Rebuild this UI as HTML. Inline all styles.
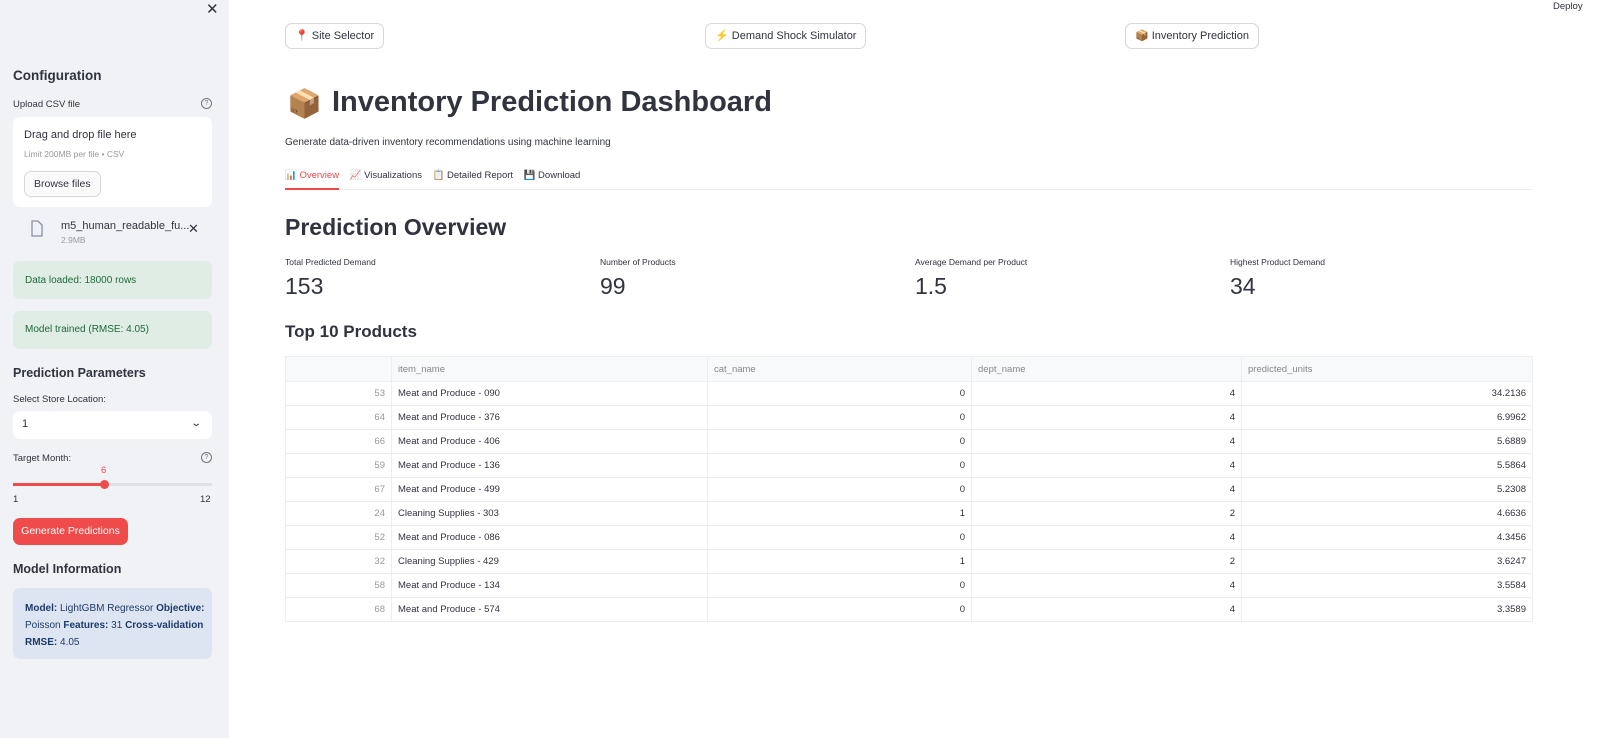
<!DOCTYPE html>
<html><head><meta charset="utf-8"><style>
*{box-sizing:border-box;margin:0;padding:0}
body{width:1600px;height:738px;overflow:hidden;font-family:"Liberation Sans",sans-serif;color:#31333f;background:#fff;position:relative}
.sb{position:absolute;left:0;top:0;width:229px;height:738px;background:#f0f2f6}
.a{position:absolute;white-space:nowrap}
.btn{position:absolute;border:1px solid #d5d7dc;border-radius:7px;background:#fff;font-size:11px;height:26px;line-height:24px;padding:0 9px}
.box{position:absolute;border-radius:7px}
table{position:absolute;left:285px;top:356px;width:1248px;border-collapse:collapse;font-size:9.5px;border:1px solid #e6e8ec}
td{border:1px solid #eceef1;height:24px;padding:0 6px}
tr:first-child td{height:25px;background:#f8f9fb;color:#888}
td.i{color:#999;text-align:right;width:106px}
td.r{text-align:right}
</style></head><body>
<div class="sb">
<div class="a" style="left:206px;top:0;font-size:15px">✕</div>
<div class="a" style="left:13px;top:68px;font-size:13.5px;font-weight:bold">Configuration</div>
<div class="a" style="left:13px;top:99px;font-size:9.5px">Upload CSV file</div>
<div class="a" style="left:201px;top:98px;width:11px;height:11px;border:1px solid #777;border-radius:50%;font-size:7px;text-align:center;line-height:9px;color:#777">?</div>
<div class="box" style="left:13px;top:117px;width:199px;height:90px;background:#fff"></div>
<div class="a" style="left:24px;top:129px;font-size:11px">Drag and drop file here</div>
<div class="a" style="left:24px;top:149px;font-size:8.5px;color:#999">Limit 200MB per file • CSV</div>
<div class="btn" style="left:24px;top:171px;height:26px;font-size:10.5px;background:#fafafa">Browse files</div>
<svg class="a" style="left:30px;top:220px" width="14" height="17" viewBox="0 0 14 17"><path d="M2 1h6l4 4v11H2z" fill="none" stroke="#8a8fa8" stroke-width="1.3"/></svg>
<div class="a" style="left:61px;top:220px;font-size:11px">m5_human_readable_fu...</div>
<div class="a" style="left:61px;top:235px;font-size:8.5px;color:#999">2.9MB</div>
<div class="a" style="left:188px;top:221px;font-size:13px">✕</div>
<div class="box" style="left:13px;top:261px;width:199px;height:38px;background:#dfede4"></div>
<div class="a" style="left:25px;top:275px;font-size:10px;color:#1f6a3a">Data loaded: 18000 rows</div>
<div class="box" style="left:13px;top:311px;width:199px;height:38px;background:#dfede4"></div>
<div class="a" style="left:25px;top:324px;font-size:10px;color:#1f6a3a">Model trained (RMSE: 4.05)</div>
<div class="a" style="left:13px;top:366px;font-size:12.5px;font-weight:bold">Prediction Parameters</div>
<div class="a" style="left:13px;top:394px;font-size:9.5px">Select Store Location:</div>
<div class="box" style="left:13px;top:411px;width:199px;height:28px;background:#fff"></div>
<div class="a" style="left:22px;top:418px;font-size:11px">1</div>
<div class="a" style="left:192px;top:418px;font-size:10px;transform:scaleX(1.4)">⌄</div>
<div class="a" style="left:13px;top:453px;font-size:9.5px">Target Month:</div>
<div class="a" style="left:201px;top:452px;width:11px;height:11px;border:1px solid #777;border-radius:50%;font-size:7px;text-align:center;line-height:9px;color:#777">?</div>
<div class="a" style="left:101px;top:465px;font-size:9.5px;color:#ef4b4b">6</div>
<div class="a" style="left:13px;top:483px;width:199px;height:3px;background:#dfe1e6"></div>
<div class="a" style="left:13px;top:483px;width:92px;height:3px;background:#ef4b4b"></div>
<div class="a" style="left:100px;top:480px;width:9px;height:9px;border-radius:50%;background:#ef4b4b"></div>
<div class="a" style="left:13px;top:494px;font-size:9.5px">1</div>
<div class="a" style="left:200px;top:494px;font-size:9.5px">12</div>
<div class="box" style="left:13px;top:518px;width:115px;height:27px;background:#ef4b4b;color:#fff;font-size:10.5px;text-align:center;line-height:27px">Generate Predictions</div>
<div class="a" style="left:13px;top:562px;font-size:12.5px;font-weight:bold">Model Information</div>
<div class="box" style="left:13px;top:588px;width:199px;height:71px;background:#dde5f2"></div>
<div class="a" style="left:25px;top:600px;font-size:10px;line-height:17px;color:#1e3a6a;white-space:normal;width:182px"><b>Model:</b> LightGBM Regressor <b>Objective:</b> Poisson <b>Features:</b> 31 <b>Cross-validation RMSE:</b> 4.05</div>
</div>
<div class="a" style="left:1553px;top:1px;font-size:9.5px">Deploy</div>
<div class="btn" style="left:285px;top:23px">📍 Site Selector</div>
<div class="btn" style="left:705px;top:23px">⚡ Demand Shock Simulator</div>
<div class="btn" style="left:1125px;top:23px">📦 Inventory Prediction</div>
<div class="a" style="left:287px;top:87px;font-size:28px">📦</div>
<div class="a" style="left:332px;top:86px;font-size:29px;font-weight:bold">Inventory Prediction Dashboard</div>
<div class="a" style="left:285px;top:137px;font-size:10px">Generate data-driven inventory recommendations using machine learning</div>
<div class="a" style="left:285px;top:170px;font-size:9.5px"><span style="color:#ef4b4b">📊 Overview</span>&nbsp;&nbsp;&nbsp; 📈 Visualizations &nbsp;&nbsp; 📋 Detailed Report &nbsp;&nbsp; 💾 Download</div>
<div class="a" style="left:285px;top:189px;width:1248px;height:1px;background:#eceef1"></div>
<div class="a" style="left:285px;top:188px;width:54px;height:2px;background:#ef4b4b"></div>
<div class="a" style="left:285px;top:214px;font-size:23px;font-weight:bold">Prediction Overview</div>
<div class="a" style="left:285px;top:257px;font-size:8.5px">Total Predicted Demand</div>
<div class="a" style="left:285px;top:273px;font-size:23px">153</div>
<div class="a" style="left:600px;top:257px;font-size:8.5px">Number of Products</div>
<div class="a" style="left:600px;top:273px;font-size:23px">99</div>
<div class="a" style="left:915px;top:257px;font-size:8.5px">Average Demand per Product</div>
<div class="a" style="left:915px;top:273px;font-size:23px">1.5</div>
<div class="a" style="left:1230px;top:257px;font-size:8.5px">Highest Product Demand</div>
<div class="a" style="left:1230px;top:273px;font-size:23px">34</div>
<div class="a" style="left:285px;top:322px;font-size:17px;font-weight:bold">Top 10 Products</div>
<table>
<tr><td class="i"></td><td style="width:316px">item_name</td><td style="width:264px">cat_name</td><td style="width:270px">dept_name</td><td>predicted_units</td></tr>
<tr><td class="i">53</td><td>Meat and Produce - 090</td><td class="r">0</td><td class="r">4</td><td class="r">34.2136</td></tr>
<tr><td class="i">64</td><td>Meat and Produce - 376</td><td class="r">0</td><td class="r">4</td><td class="r">6.9962</td></tr>
<tr><td class="i">66</td><td>Meat and Produce - 406</td><td class="r">0</td><td class="r">4</td><td class="r">5.6889</td></tr>
<tr><td class="i">59</td><td>Meat and Produce - 136</td><td class="r">0</td><td class="r">4</td><td class="r">5.5864</td></tr>
<tr><td class="i">67</td><td>Meat and Produce - 499</td><td class="r">0</td><td class="r">4</td><td class="r">5.2308</td></tr>
<tr><td class="i">24</td><td>Cleaning Supplies - 303</td><td class="r">1</td><td class="r">2</td><td class="r">4.6636</td></tr>
<tr><td class="i">52</td><td>Meat and Produce - 086</td><td class="r">0</td><td class="r">4</td><td class="r">4.3456</td></tr>
<tr><td class="i">32</td><td>Cleaning Supplies - 429</td><td class="r">1</td><td class="r">2</td><td class="r">3.6247</td></tr>
<tr><td class="i">58</td><td>Meat and Produce - 134</td><td class="r">0</td><td class="r">4</td><td class="r">3.5584</td></tr>
<tr><td class="i">68</td><td>Meat and Produce - 574</td><td class="r">0</td><td class="r">4</td><td class="r">3.3589</td></tr>
</table>
</body></html>
